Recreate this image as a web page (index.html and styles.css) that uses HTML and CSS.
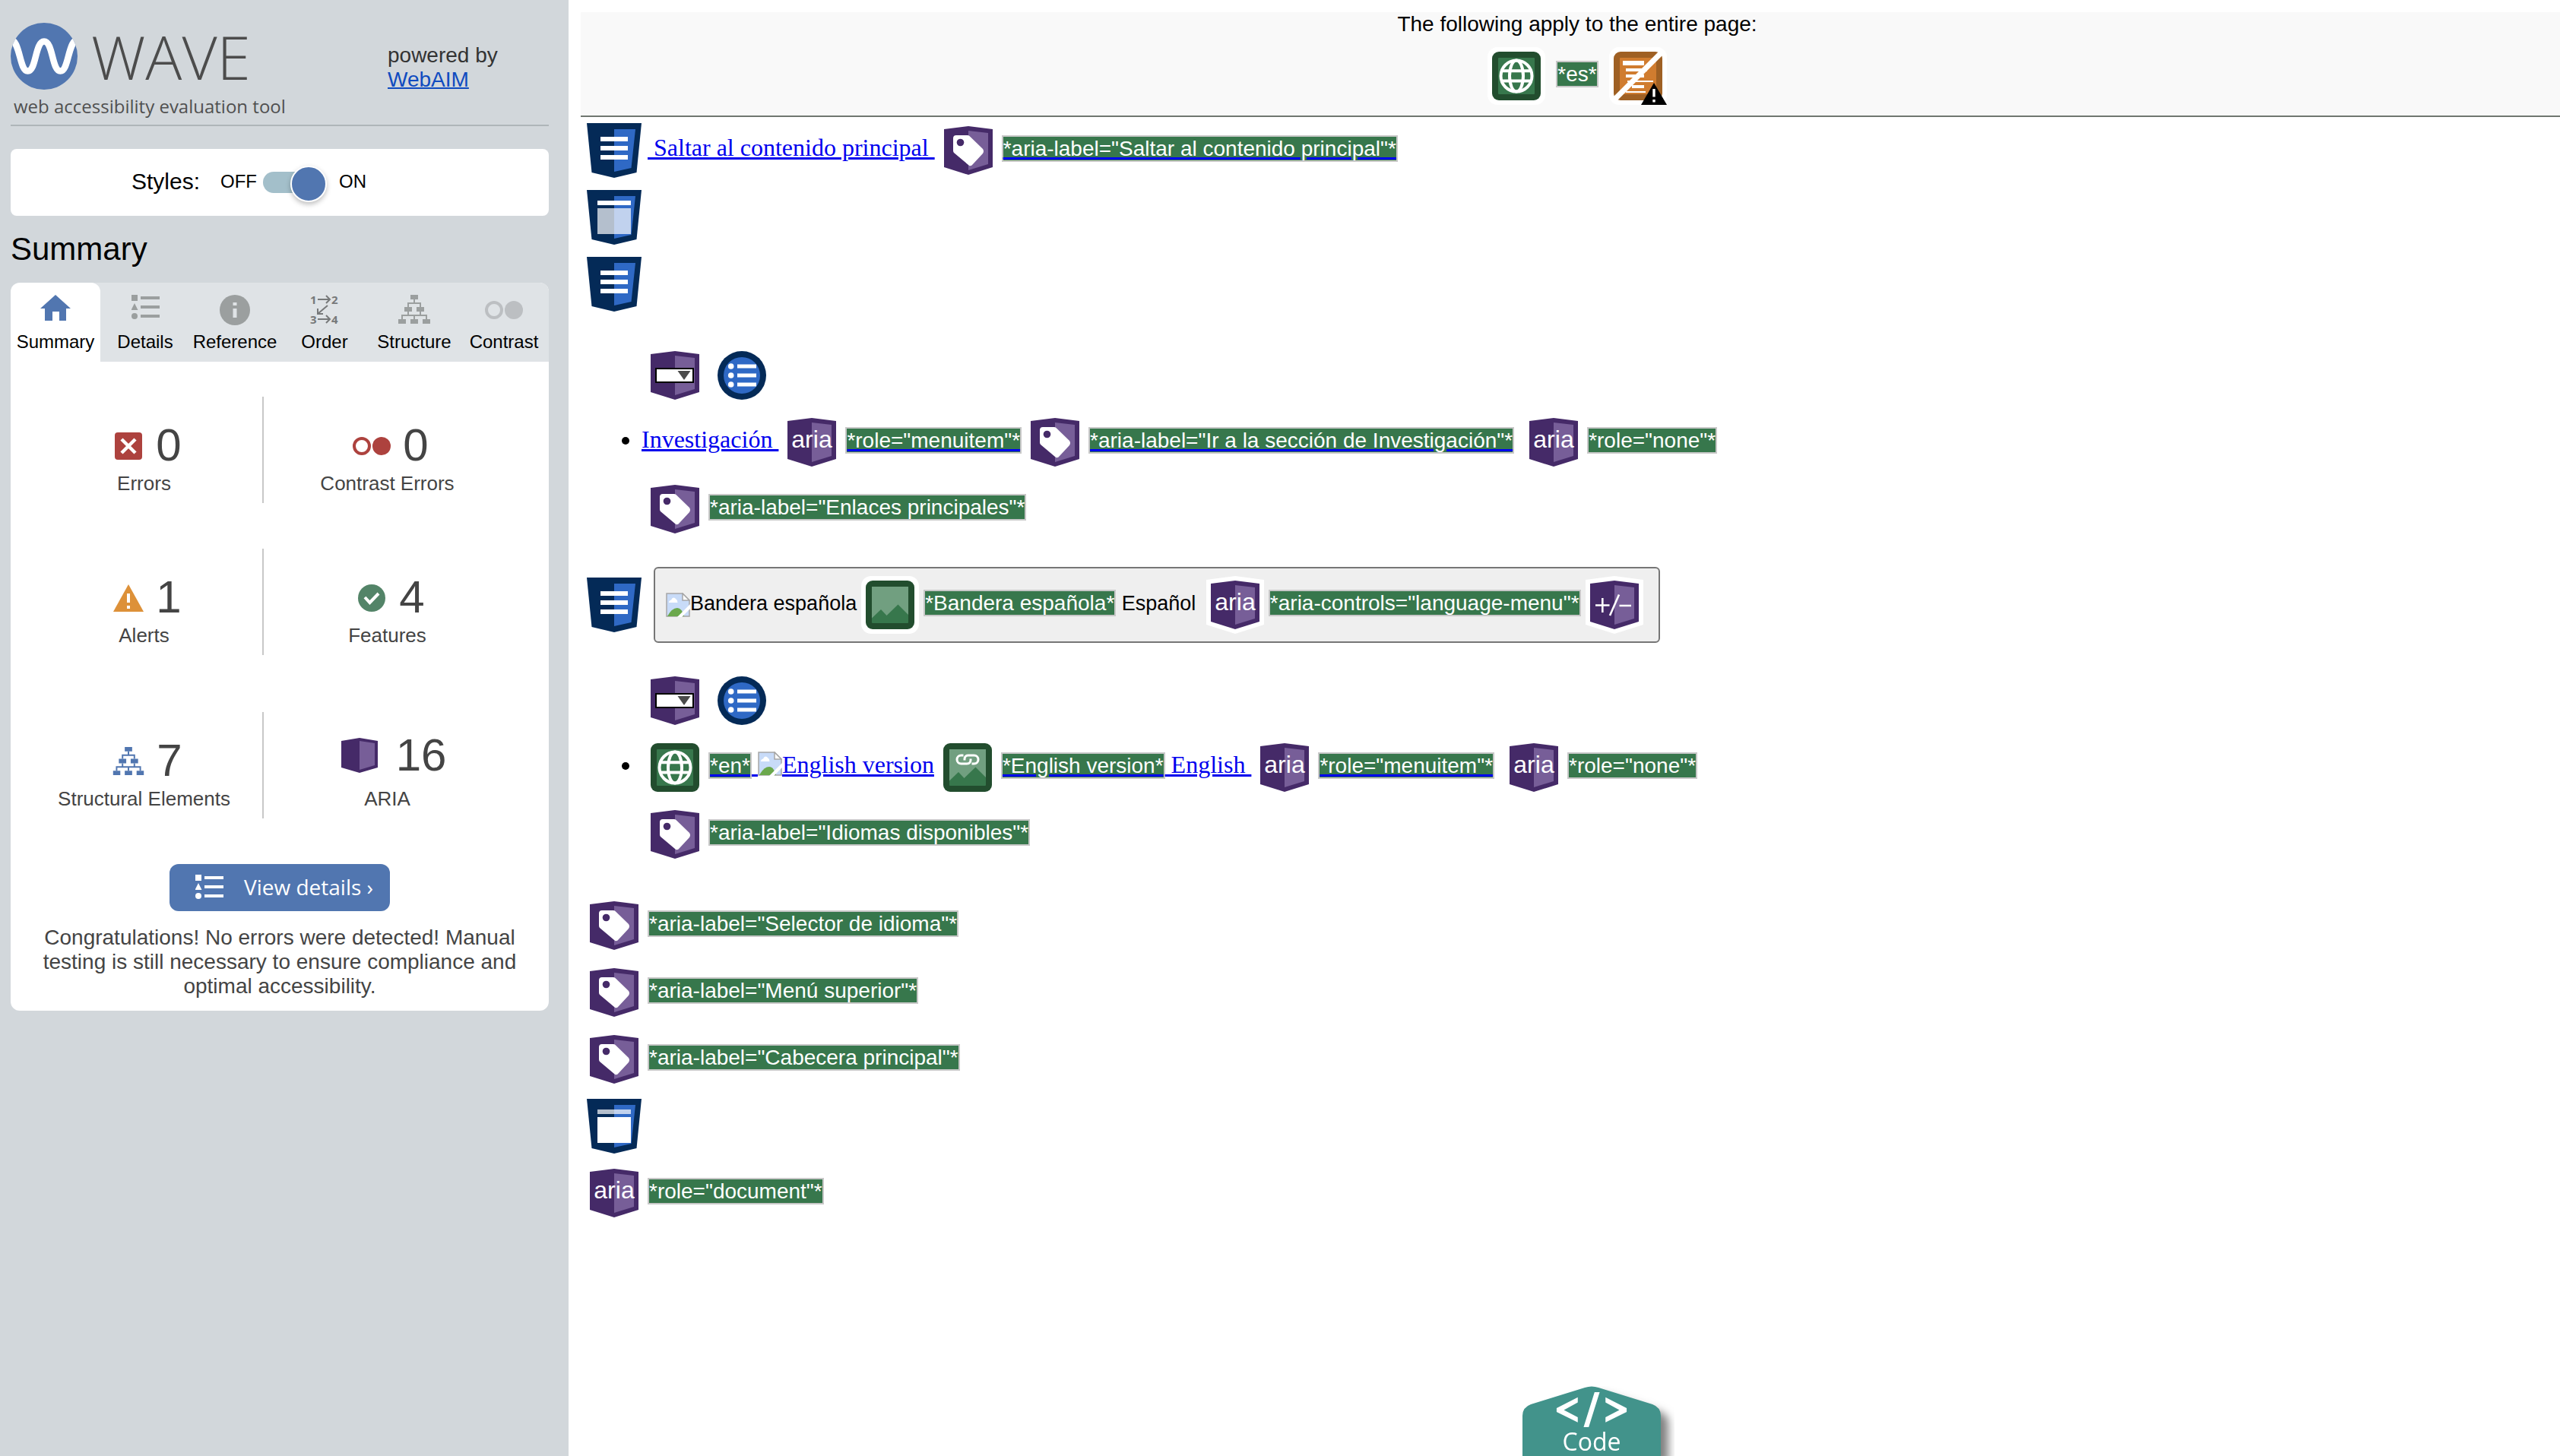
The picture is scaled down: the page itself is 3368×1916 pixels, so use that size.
FILE: index.html
```html
<!DOCTYPE html>
<html lang="en">
<head>
<meta charset="utf-8">
<title>WAVE report</title>
<meta name="viewport" content="width=device-width, initial-scale=1">
<link rel="stylesheet" href="styles.css">
</head>
<body>
<svg class="sprite" aria-hidden="true">
  <symbol id="html-base" viewBox="0 0 88 88">
    <path d="M8 8H80L73.500 73 44 80 14.500 73Z" fill="#042a57"/>
    <path d="M44 16H72L66.500 67 44 72Z" fill="#2f69c5"/>
  </symbol>
  <symbol id="i-nav" viewBox="0 0 88 88">
    <use href="#html-base"/>
    <path d="M26 26H62V32H26ZM26 38H62V44H26ZM26 50H62V56H26Z" fill="#fff"/>
  </symbol>
  <symbol id="i-header" viewBox="0 0 88 88">
    <use href="#html-base"/>
    <path d="M22 22H66V28H22Z" fill="#fff"/>
    <path d="M22 32H66V66H22Z" fill="#fff" opacity=".7"/>
  </symbol>
  <symbol id="i-main" viewBox="0 0 88 88">
    <use href="#html-base"/>
    <path d="M22 22H66V28H22Z" fill="#fff" opacity=".7"/>
    <path d="M22 32H66V66H22Z" fill="#fff"/>
  </symbol>
  <symbol id="aria-base" viewBox="0 0 88 88">
    <path d="M6 11 44 6 82 11V70L44 82 6 70Z" fill="#fff"/>
    <path d="M12 16 44 12 76 16V66L44 76 12 66Z" fill="#452a68"/>
    <path d="M44 18 70 21V62L44 70Z" fill="#775e98"/>
  </symbol>
  <symbol id="i-aria" viewBox="0 0 88 88">
    <use href="#aria-base"/>
    <text x="44" y="51" class="aria-text">aria</text>
  </symbol>
  <symbol id="i-label" viewBox="0 0 88 88">
    <use href="#aria-base"/>
    <path d="M28 24H43Q45 24 46.500 26L63 42Q65 45 63 48L50 62Q47 66 44 63L25 47Q24 46 24 44V28Q24 24 28 24Z" fill="#fff"/>
    <circle cx="33.500" cy="33.500" r="4.800" fill="#452a68"/>
  </symbol>
  <symbol id="i-expand" viewBox="0 0 88 88">
    <use href="#aria-base"/>
    <path d="M19 44.500H37.500M28.300 35V54M50 30.500 38 58M50.500 45H66" fill="none" stroke="#fff" stroke-width="2.600"/>
  </symbol>
  <symbol id="i-menu" viewBox="0 0 88 88">
    <use href="#aria-base"/>
    <rect x="19" y="35" width="49" height="18" fill="#fff" stroke="#000" stroke-width="2"/>
    <path d="M47.500 38H64.500L56 50Z" fill="#4a4a4a"/>
  </symbol>
  <symbol id="i-list" viewBox="0 0 88 88">
    <circle cx="44" cy="44" r="32" fill="#042a57"/>
    <circle cx="44" cy="44" r="24" fill="#2f69c5"/>
    <g fill="#fff"><circle cx="29.700" cy="32" r="3.800"/><circle cx="29.700" cy="44" r="3.800"/><circle cx="29.700" cy="56" r="3.800"/>
    <path d="M38 29.500H63V34.500H38ZM38 41.500H63V46.500H38ZM38 53.500H63V58.500H38Z"/></g>
  </symbol>
  <symbol id="feature-base" viewBox="0 0 88 88">
    <rect x="6" y="6" width="76" height="76" rx="13" fill="#fff"/>
    <rect x="12" y="12" width="64" height="64" rx="9" fill="#224d2e"/>
    <rect x="20" y="20" width="48" height="48" rx="1" fill="#37774c"/>
  </symbol>
  <symbol id="i-lang" viewBox="0 0 88 88">
    <use href="#feature-base"/>
    <g fill="none" stroke="#fff" stroke-width="4"><circle cx="44" cy="44" r="20.500"/><ellipse cx="44" cy="44" rx="9" ry="20.500"/><path d="M25 37.300H63M25 50.500H63"/></g>
  </symbol>
  <symbol id="i-alt" viewBox="0 0 88 88">
    <use href="#feature-base"/>
    <path d="M20 20H68V57L54.500 43.500 39.500 58 32 50 20 61.500Z" fill="#719f80"/>
  </symbol>
  <symbol id="i-alt-link" viewBox="0 0 88 88">
    <use href="#i-alt"/>
    <path d="M38.500 28H35.500a5.500 5.500 0 0 0 0 11H43Q48.500 39 48 32.500M49.500 39H52.500a5.500 5.500 0 0 0 0-11H45Q39.500 28 40 34.500" fill="none" stroke="#fff" stroke-width="3"/>
  </symbol>
  <symbol id="i-structure-missing" viewBox="0 0 88 88">
    <rect x="6" y="6" width="76" height="76" rx="13" fill="#fff"/>
    <rect x="12" y="12" width="64" height="64" rx="9" fill="#9f6023"/>
    <rect x="20" y="20" width="48" height="48" rx="1" fill="#d07c2f"/>
    <path d="M24 24H52V30H24ZM28 34H56V38H28ZM28 42H52V46H28ZM30 50H64V52H30ZM36 56H52V60H36ZM28 64H54V66H28Z" fill="#fff"/>
    <path d="M76 12 12 76" stroke="#fff" stroke-width="7"/>
    <path d="M65 53 82 82H48Z" fill="#000"/>
    <path d="M63.300 61H66.700V71.500H63.300ZM63.300 75H66.700V78.500H63.300Z" fill="#fff"/>
  </symbol>
  <symbol id="i-broken" viewBox="0 0 32 32">
    <path d="M1 1H22L31 10V31H1Z" fill="#c8dbf8" stroke="#a6a6a6" stroke-width="1.500"/>
    <path d="M2 31Q8 20 15 20 21 20 24 31Z" fill="#6ba84c"/>
    <path d="M4 13Q4 10 7 9.500 9 5 12.500 7.500 15 9 15.500 13Z" fill="#fff"/>
    <path d="M22 1V10H31Z" fill="#fff" stroke="#a6a6a6" stroke-width="1.500"/>
    <path d="M15 32 32 15V21L21 32Z" fill="#fff"/>
  </symbol>
  <symbol id="s-details" viewBox="0 0 37 32">
    <path d="M0 0H8V8H0ZM4 11 8.500 20H-.5ZM12 2H37V6H12ZM12 14H37V18H12ZM12 26H37V30H12Z"/><circle cx="4" cy="28" r="4"/>
  </symbol>
  <symbol id="s-structure" viewBox="0 0 42 38">
    <path d="M16 0H26V6H16ZM8 16H18V22H8ZM24 16H34V22H24ZM0 32H10V38H0ZM16 32H26V38H16ZM32 32H42V38H32Z"/>
    <path d="M21 6V11M13 16V11H29V16M13 22V27M29 22V27M5 32V27H37V32M21 27V32" fill="none" stroke="currentColor" stroke-width="2"/>
  </symbol>
  <symbol id="s-contrast" viewBox="0 0 50 24">
    <circle cx="12" cy="12" r="10" fill="none" stroke="currentColor" stroke-width="4"/><circle cx="38" cy="12" r="12"/>
  </symbol>
</svg>

<div class="app">
  <aside class="sidebar">
    <header class="brand">
      <div>
        <div class="logo">
          <svg width="88" height="88" viewBox="0 0 88 88" aria-hidden="true">
            <clipPath id="disc"><circle cx="44" cy="44" r="44"/></clipPath>
            <g clip-path="url(#disc)"><rect width="88" height="88" fill="#5176b0"/>
            <path d="M-2 21C13 21 11 63.500 22.500 63.500 34 63.500 32 24.500 44 24.500 56 24.500 54 63.500 65.500 63.500 77 63.500 75 21 90 21" fill="none" stroke="#fff" stroke-width="8.500"/></g>
          </svg>
          <span class="wordmark">WAVE</span>
        </div>
        <p class="tagline">web accessibility evaluation tool</p>
      </div>
      <p class="powered">powered by<br><a href="#webaim">WebAIM</a></p>
    </header>

    <div class="styles-card">
      <span class="styles-label" id="styles-label">Styles:</span>
      <label class="toggle">OFF <input type="checkbox" checked aria-labelledby="styles-label"> ON</label>
    </div>

    <h1 class="heading">Summary</h1>

    <section class="panel">
      <nav class="tabs">
        <button class="tab active" type="button">
          <svg width="50" height="40" viewBox="0 0 50 40"><path d="M25 0 45 18H39V34H30V22H21V34H11V18H5Z"/></svg>Summary</button>
        <button class="tab" type="button">
          <svg width="50" height="40" viewBox="0 0 50 40"><use href="#s-details" x="7" width="37" height="32"/></svg>Details</button>
        <button class="tab" type="button">
          <svg width="50" height="40" viewBox="0 0 50 40"><circle cx="25" cy="20" r="20"/><path d="M22.500 10H27.500V14H22.500ZM22.500 18H27.500V30H22.500Z" fill="#dfe3e6"/></svg>Reference</button>
        <button class="tab order" type="button">
          <svg width="50" height="40" viewBox="0 0 50 40"><text x="6" y="12">1</text><text x="34" y="12">2</text><text x="6" y="38">3</text><text x="34" y="38">4</text><path d="M16 6H32M27 1 32 6 27 11M29 14 16 25M16 18V25H23M16 32H32M27 27 32 32 27 37" fill="none" stroke="currentColor" stroke-width="2"/></svg>Order</button>
        <button class="tab" type="button">
          <svg width="50" height="40" viewBox="0 0 50 40"><use href="#s-structure" x="4" width="42" height="38"/></svg>Structure</button>
        <button class="tab contrast" type="button">
          <svg width="50" height="40" viewBox="0 0 50 40"><use href="#s-contrast" y="8" width="50" height="24"/></svg>Contrast</button>
      </nav>

      <div class="counts">
        <div class="count">
          <div class="figure"><svg width="40" height="36" viewBox="0 0 40 36"><rect x="2" width="36" height="36" rx="4" fill="#ad423e"/><path d="M11 9 29 27M29 9 11 27" stroke="#fff" stroke-width="4.500"/></svg>0</div>
          <div class="name">Errors</div>
        </div>
        <div class="count">
          <div class="figure red"><svg width="50" height="30" viewBox="0 0 50 30"><use href="#s-contrast" width="50" height="24"/></svg>0</div>
          <div class="name">Contrast Errors</div>
        </div>
        <div class="count">
          <div class="figure"><svg width="40" height="36" viewBox="0 0 40 36"><path d="M20 0 40 36H0Z" fill="#dd9139"/><path d="M18 12H22V24H18ZM18 28H22V32H18Z" fill="#fff"/></svg>1</div>
          <div class="name">Alerts</div>
        </div>
        <div class="count">
          <div class="figure"><svg width="40" height="36" viewBox="0 0 40 36"><circle cx="20" cy="18" r="18" fill="#538468"/><path d="M11 17 17.500 24 29 12" fill="none" stroke="#fff" stroke-width="4"/></svg>4</div>
          <div class="name">Features</div>
        </div>
        <div class="count last">
          <div class="figure blue"><svg width="42" height="37" viewBox="0 0 42 38"><use href="#s-structure" width="42" height="38"/></svg>7</div>
          <div class="name">Structural Elements</div>
        </div>
        <div class="count last raised">
          <div class="figure"><svg width="64" height="46" viewBox="0 0 64 46"><path d="M8 4 32 0 56 4V39L32 46 8 39Z" fill="#452a68"/><path d="M32 4 52 7V36L32 42Z" fill="#775e98"/></svg>16</div>
          <div class="name">ARIA</div>
        </div>
      </div>

      <button class="view" type="button"><svg width="37" height="32" viewBox="0 0 37 32"><use href="#s-details" width="37" height="32"/></svg>View details ›</button>
      <p class="note">Congratulations! No errors were detected! Manual testing is still necessary to ensure compliance and optimal accessibility.</p>
    </section>
  </aside>

  <main class="page" lang="es">
    <div class="page-wide" lang="en">
      <p>The following apply to the entire page:</p>
      <div><svg class="ic"><use href="#i-lang"/></svg> <span class="tag">*es*</span> <svg class="ic"><use href="#i-structure-missing"/></svg></div>
    </div>

    <div><svg class="ic"><use href="#i-nav"/></svg><a href="#contenido">&nbsp;Saltar al contenido principal <svg class="ic"><use href="#i-label"/></svg><span class="tag">*aria-label="Saltar al contenido principal"*</span></a></div>
    <div><svg class="ic"><use href="#i-header"/></svg></div>
    <div><svg class="ic"><use href="#i-nav"/></svg></div>

    <ul>
      <li class="marks"><svg class="ic"><use href="#i-menu"/></svg><svg class="ic"><use href="#i-list"/></svg></li>
      <li><a href="#investigacion">Investigación <svg class="ic"><use href="#i-aria"/></svg><span class="tag">*role="menuitem"*</span><svg class="ic"><use href="#i-label"/></svg><span class="tag">*aria-label="Ir a la sección de Investigación"*</span></a> <svg class="ic"><use href="#i-aria"/></svg><span class="tag">*role="none"*</span></li>
      <li class="marks"><svg class="ic"><use href="#i-label"/></svg><span class="tag">*aria-label="Enlaces principales"*</span></li>
    </ul>

    <div><svg class="ic"><use href="#i-nav"/></svg> <button class="lang" type="button"><svg class="broken"><use href="#i-broken"/></svg>Bandera española<svg class="ic"><use href="#i-alt"/></svg><span class="tag">*Bandera española*</span> Español <svg class="ic"><use href="#i-aria"/></svg><span class="tag">*aria-controls="language-menu"*</span><svg class="ic"><use href="#i-expand"/></svg></button></div>

    <ul>
      <li class="marks"><svg class="ic"><use href="#i-menu"/></svg><svg class="ic"><use href="#i-list"/></svg></li>
      <li><a href="#english"><svg class="ic"><use href="#i-lang"/></svg><span class="tag">*en*</span> <svg class="broken"><use href="#i-broken"/></svg>English version<svg class="ic"><use href="#i-alt-link"/></svg><span class="tag">*English version*</span> English <svg class="ic"><use href="#i-aria"/></svg><span class="tag">*role="menuitem"*</span></a> <svg class="ic"><use href="#i-aria"/></svg><span class="tag">*role="none"*</span></li>
      <li class="marks"><svg class="ic"><use href="#i-label"/></svg><span class="tag">*aria-label="Idiomas disponibles"*</span></li>
    </ul>

    <div><svg class="ic"><use href="#i-label"/></svg><span class="tag">*aria-label="Selector de idioma"*</span></div>
    <div><svg class="ic"><use href="#i-label"/></svg><span class="tag">*aria-label="Menú superior"*</span></div>
    <div><svg class="ic"><use href="#i-label"/></svg><span class="tag">*aria-label="Cabecera principal"*</span></div>
    <div><svg class="ic"><use href="#i-main"/></svg></div>
    <div><svg class="ic"><use href="#i-aria"/></svg><span class="tag">*role="document"*</span></div>
  </main>
</div>

<div class="code-dock">
  <button class="code" type="button">
    <svg class="code-shape" width="200" height="92" viewBox="0 0 200 92" aria-hidden="true"><path d="M0 92V39Q0 28 11 24L82 2Q91-1 100 2L171 24Q182 28 182 39V92Z" fill="#42938b"/></svg>
    <svg class="code-glyph" width="98" height="50" viewBox="0 0 98 50" aria-hidden="true"><path d="M30 7V14L11 24.500 30 34.500V41.500L1 27V22ZM68 7V14L87 24.500 68 34.500V41.500L97 27V22ZM53 0H60L45 48H38Z" fill="#fff"/></svg>
    <span>Code</span>
  </button>
</div>
</body>
</html>
```

FILE: styles.css
```css
* { box-sizing: border-box; }

body {
  margin: 0;
  background: #fff;
  color: #000;
  font-family: "Liberation Sans", Arial, sans-serif;
}

p, h1 { margin: 0; }

button {
  margin: 0;
  padding: 0;
  border: 0;
  background: none;
  color: inherit;
  font: inherit;
  cursor: pointer;
}

.sprite {
  position: absolute;
  width: 0;
  height: 0;
}

.app {
  display: grid;
  grid-template-columns: 748px minmax(0, 1fr);
  min-height: 100vh;
}

/* Sidebar */
.sidebar {
  padding: 30px 26px 30px 14px;
  background: #d2d7db;
}

.brand {
  display: grid;
  grid-template-columns: 496px 1fr;
  padding-bottom: 8px;
  border-bottom: 2px solid #afb6b9;
}

.logo {
  display: flex;
  gap: 18px;
}

.wordmark {
  color: #4c4c4c;
  font: 300 80px/88px "Open Sans", sans-serif;
}

.tagline {
  margin-top: 6px;
  padding-left: 4px;
  color: #505050;
  font: 400 24px/32px "Open Sans", sans-serif;
}

.powered {
  padding-top: 27px;
  color: #333;
  font-size: 28px;
  line-height: 32px;
}

.powered a {
  color: #0f4bc0;
  text-decoration-thickness: 2px;
}

.styles-card {
  display: flex;
  align-items: center;
  gap: 27px;
  height: 88px;
  margin-top: 30px;
  padding: 0 0 2px 159px;
  border-radius: 8px;
  background: #fff;
  font-size: 30px;
}

.toggle {
  display: flex;
  align-items: center;
  font-size: 24px;
}

.toggle input {
  appearance: none;
  position: relative;
  width: 76px;
  height: 28px;
  margin: 2px 24px 0 8px;
  border-radius: 14px;
  background: #a3bfca;
}

.toggle input::before {
  content: "";
  position: absolute;
  top: -8px;
  right: -8px;
  width: 44px;
  height: 44px;
  border: 2px solid #fff;
  border-radius: 50%;
  background: #5176b0;
  box-shadow: 0 3px 6px rgba(0, 0, 0, .25);
}

.heading {
  margin: 20px 0;
  font-size: 42px;
  font-weight: 400;
  line-height: 48px;
}

.panel {
  overflow: hidden;
  padding-bottom: 16px;
  border-radius: 12px;
  background: #fff;
  text-align: center;
}

.tabs {
  display: grid;
  grid-template-columns: repeat(6, 1fr);
  background: #dfe3e6;
}

.tab {
  display: flex;
  flex-direction: column;
  align-items: center;
  gap: 8px;
  padding: 16px 0 12px;
  font-size: 24px;
  line-height: 28px;
}

.tab svg {
  overflow: visible;
  color: #9b9f9f;
  fill: currentColor;
}

.tab.active {
  border-radius: 12px 12px 0 0;
  background: #fff;
}

.tab.active svg { color: #5176b0; }
.tab.contrast svg { color: #bcbfc2; }
.tab.order svg { color: #77797a; }
.tab text { font: 700 15px "Open Sans", sans-serif; }

.counts {
  display: grid;
  grid-template-columns: 313px 325px;
  row-gap: 60px;
  padding: 46px 0 60px 20px;
}

.count {
  height: 140px;
  padding-top: 34px;
  color: #444;
  font-size: 26px;
  line-height: 32px;
}

.count:nth-child(odd) { border-right: 2px solid #c8c8c8; }
.count.last { margin-top: 15px; }

.figure {
  display: flex;
  align-items: flex-end;
  justify-content: center;
  gap: 16px;
  margin-bottom: 4px;
  padding-left: 9px;
  font-size: 60px;
  line-height: 60px;
}

.figure svg {
  margin-bottom: 11px;
  color: inherit;
  fill: currentColor;
}

.figure.red svg { color: #ad423e; }
.figure.blue svg { color: #5176b0; }

.count.raised { padding-top: 27px; }

.raised .figure { margin-bottom: 11px; }
.raised .figure svg { margin-bottom: 7px; }

.view {
  display: inline-flex;
  align-items: center;
  gap: 27px;
  height: 62px;
  padding: 0 22px 2px 34px;
  border-radius: 12px;
  background: #5176b0;
  color: #fff;
  font: 400 28px/32px "Open Sans", sans-serif;
}

.view svg { fill: currentColor; }

.note {
  margin-top: 19px;
  padding: 0 34px;
  color: #444;
  font-size: 28px;
  line-height: 32px;
}

/* Evaluated page */
.page {
  padding: 16px 0 16px 16px;
  font: 32px/32px "Liberation Serif", "Times New Roman", serif;
}

.page-wide {
  padding: 0 0 8px 18px;
  border-bottom: 2px solid #707770;
  background: #f9f9f9;
  text-align: center;
}

.page-wide p {
  margin-bottom: 8px;
  font: 28px/32px "Liberation Sans", Arial, sans-serif;
}

.page ul {
  margin: 32px 0;
  padding-left: 80px;
}

.page .marks { list-style: none; }

.page a {
  color: #0000ee;
  text-decoration-thickness: 3px;
}

.ic {
  display: inline-block;
  width: 88px;
  height: 88px;
  vertical-align: middle;
}

.tag {
  border: 2px solid #c8c8c8;
  background: #37774c;
  color: #fff;
  font: 28px/32px "Liberation Sans", Arial, sans-serif;
}

.aria-text {
  fill: #fff;
  font: 32px "Liberation Sans", Arial, sans-serif;
  text-anchor: middle;
}

.broken {
  width: 32px;
  height: 32px;
  vertical-align: -4px;
}

.lang {
  padding: 4px 14px;
  border: 2px solid #767676;
  border-radius: 6px;
  background: #efefef;
  font: 27px/32px "Liberation Sans", Arial, sans-serif;
  vertical-align: middle;
}

.lang .broken { vertical-align: middle; }

/* Code panel handle, pinned to the bottom of the page area */
.code-dock {
  position: fixed;
  right: 0;
  bottom: 0;
  left: 820px;
  display: flex;
  justify-content: center;
  pointer-events: none;
}

.code {
  position: relative;
  display: flex;
  flex-direction: column;
  align-items: center;
  width: 182px;
  height: 92px;
  padding: 8px 0 2px;
  color: #fff;
  font: 400 32px/34px "Open Sans", sans-serif;
  pointer-events: auto;
}

.code-shape {
  position: absolute;
  top: 0;
  left: 0;
  overflow: hidden;
}

.code-shape path { filter: drop-shadow(10px 10px 6px rgba(0, 0, 0, .5)); }

.code-glyph { height: 48px; }

.code-glyph, .code span { position: relative; }
```
